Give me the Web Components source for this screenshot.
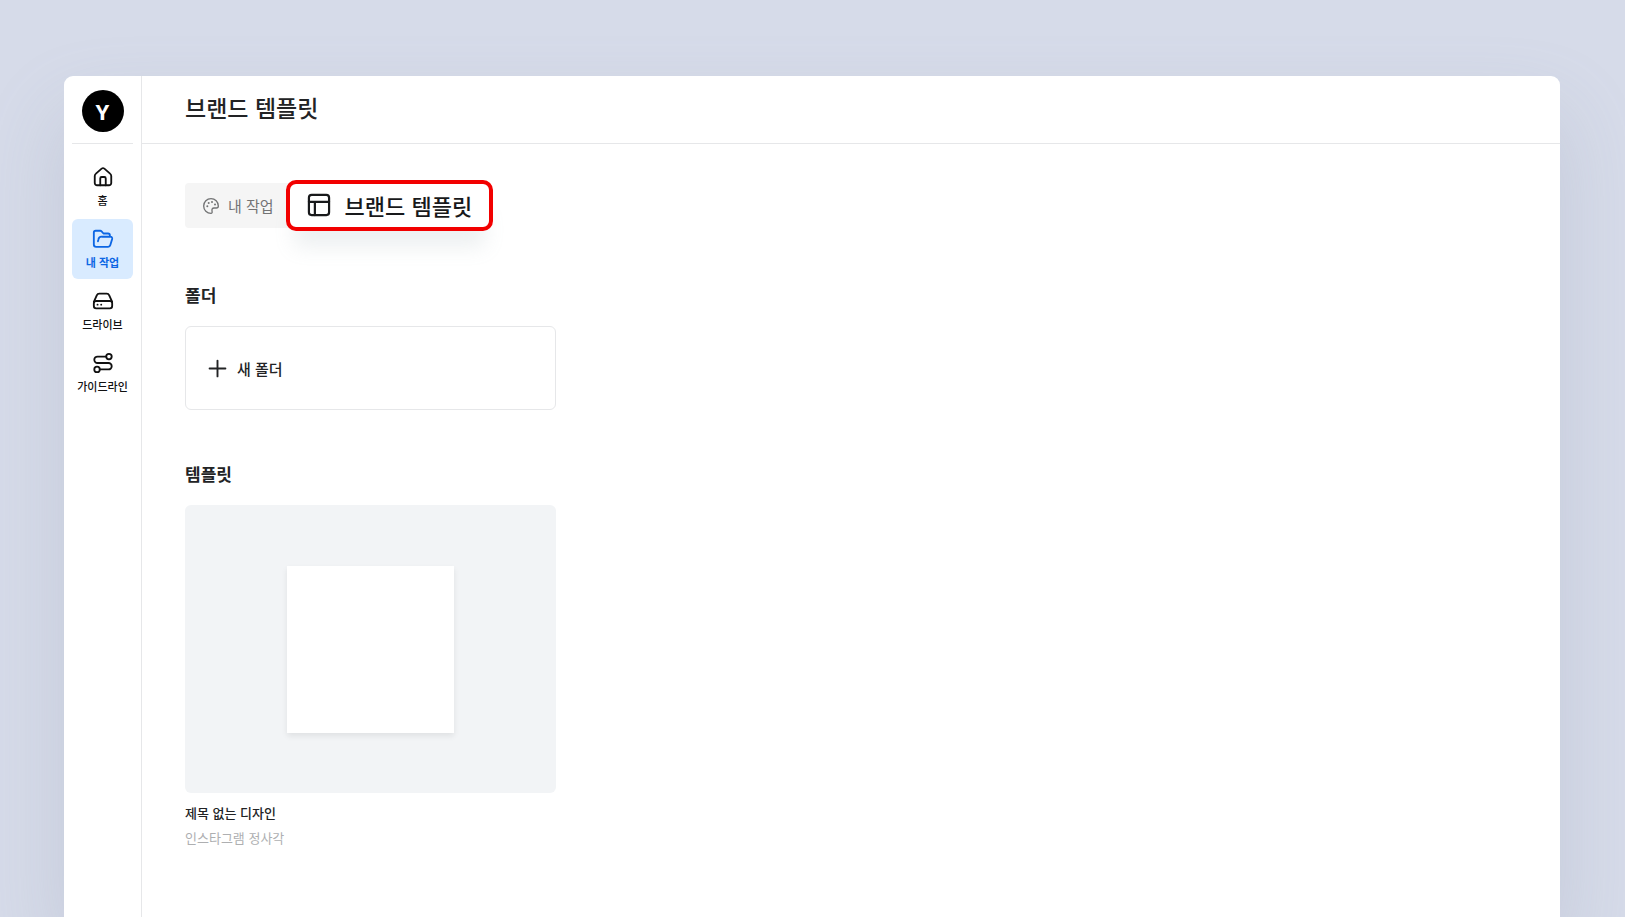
<!DOCTYPE html>
<html lang="ko">
<head>
<meta charset="utf-8">
<meta name="viewport" content="width=device-width, initial-scale=1">
<title>브랜드 템플릿</title>
<style>
  * { box-sizing: border-box; }

  body {
    --line: #e6e7e9;
    --ink: #222325;
    --blue: #0c66e4;
    margin: 0;
    min-height: 100vh;
    display: flex;
    background: #d6dbe9;
    color: var(--ink);
    font-family: "Noto Sans CJK KR", "Noto Sans", sans-serif;
    overflow: hidden;
  }
</style>
</head>
<body>
<app-window>
  <side-nav slot="nav">
    <nav-item icon="home">홈</nav-item>
    <nav-item icon="folder" active>내 작업</nav-item>
    <nav-item icon="drive">드라이브</nav-item>
    <nav-item icon="route">가이드라인</nav-item>
  </side-nav>
  <page-header slot="header">브랜드 템플릿</page-header>
  <tab-bar>
    <tab-item icon="palette">내 작업</tab-item>
    <tab-item icon="layout" selected>브랜드 템플릿</tab-item>
  </tab-bar>
  <card-section heading="폴더">
    <new-folder>새 폴더</new-folder>
  </card-section>
  <card-section heading="템플릿">
    <template-card>
      제목 없는 디자인
      <span slot="kind">인스타그램 정사각</span>
    </template-card>
  </card-section>
</app-window>

<script>
const ICONS = {
  home: `<path d="M3 11 C3 9.800 3.400 9 4.300 8.300 L10.500 2.900 Q12 1.700 13.500 2.900 L19.700 8.300 C20.600 9 21 9.800 21 11 V18.500 A2.500 2.500 0 0 1 18.500 21 H5.500 A2.500 2.500 0 0 1 3 18.500 Z"/><path d="M9 21 V13.500 A1.500 1.500 0 0 1 10.500 12 H13.500 A1.500 1.500 0 0 1 15 13.500 V21"/>`,
  folder: `<path d="M19.500 9 V8 A2 2 0 0 0 17.500 6 H12.500 L10.500 3.800 A2 2 0 0 0 9 3 H4 A2 2 0 0 0 2 5 V18 A2.500 2.500 0 0 0 4.500 20.500 H17.500 A2.500 2.500 0 0 0 20 18.600 L22 12 A2 2 0 0 0 20 9.500 H10.500 A3.500 3.500 0 0 0 7 12.500 L6.500 14.500"/>`,
  drive: `<path d="M2 13 L5.200 5.800 A3 3 0 0 1 8 4 H16 A3 3 0 0 1 18.800 5.800 L22 13"/><path d="M4.500 12 H19.500 A2.500 2.500 0 0 1 22 14.500 V17.500 A2.500 2.500 0 0 1 19.500 20 H4.500 A2.500 2.500 0 0 1 2 17.500 V14.500 A2.500 2.500 0 0 1 4.500 12 Z"/><path d="M6 16 H6.100 M10 16 H10.100"/>`,
  route: `<circle cx="18.500" cy="5" r="3"/><circle cx="5.500" cy="19" r="3"/><path d="M15.500 5 H6 A3.500 3.500 0 0 0 6 12 H18 A3.500 3.500 0 0 1 18 19 H8.500"/>`,
  palette: `<path d="M12 1 A11 11 0 1 0 12 23 C13.500 23 14 21.800 13.600 20 C12.900 17 14 15 16.500 15 H20 C22 15 23 13.800 23 12 A11 11 0 0 0 12 1 Z"/><g fill="currentColor" stroke="none"><circle cx="6.500" cy="12.500" r="1.500"/><circle cx="8.500" cy="7.500" r="1.500"/><circle cx="13.500" cy="6" r="1.500"/><circle cx="18" cy="9.800" r="1.500"/></g>`,
  layout: `<rect x="1" y="1" width="22" height="22" rx="3"/><path d="M1 8.500 H23 M7.500 8.500 V23"/>`,
  plus: `<path d="M12 2 V22 M2 12 H22"/>`
};

function icon(name, size, stroke) {
  return /* html */`
    <svg width="${size}" height="${size}" viewBox="0 0 24 24" fill="none"
      stroke="currentColor" stroke-width="${stroke}" stroke-linecap="round"
      stroke-linejoin="round" overflow="visible" aria-hidden="true">${ICONS[name]}</svg>`;
}

class BaseElement extends HTMLElement {
  constructor() {
    super();
    this.attachShadow({ mode: "open" });
  }

  connectedCallback() {
    this.shadowRoot.innerHTML = /* html */`
    <style>
      * { box-sizing: border-box; margin: 0; }
      :host { display: block; box-sizing: border-box; }
      button { font: inherit; color: inherit; border: 0; background: none; padding: 0; cursor: pointer; }
      svg { flex: none; display: block; }
      ${this.constructor.styles}
    </style>
    ${this.render()}`;
  }
}

class AppWindow extends BaseElement {
  static get styles() {
    return /* css */`
      :host {
        flex: 1;
        display: flex;
        margin: 76px 65px 0 64px;
        background: #fff;
        border-radius: 9px 9px 0 0;
        box-shadow: 0 40px 80px #8a92a83d;
      }

      .page {
        flex: 1;
        min-width: 0;
      }

      main {
        display: flex;
        flex-direction: column;
        gap: 48px;
        padding: 36px 43px;
      }
    `;
  }

  render() {
    return /* html */`
    <slot name="nav"></slot>
    <div class="page">
      <slot name="header"></slot>
      <main><slot></slot></main>
    </div>`;
  }
}

class SideNav extends BaseElement {
  static get styles() {
    return /* css */`
      :host {
        flex: none;
        width: 78px;
        padding: 0 8px;
        border-right: 1px solid var(--line);
      }

      .brand {
        display: flex;
        justify-content: center;
        padding: 14px 0 11px;
        border-bottom: 1px solid var(--line);
      }

      .avatar {
        width: 42px;
        height: 42px;
        border-radius: 50%;
        background: #000;
        color: #fff;
        font: 700 22px/40px "Noto Sans", sans-serif;
        text-align: center;
      }

      nav {
        display: flex;
        flex-direction: column;
        gap: 2px;
        padding-top: 13px;
      }
    `;
  }

  render() {
    return /* html */`
    <div class="brand"><button class="avatar">Y</button></div>
    <nav><slot></slot></nav>`;
  }
}

class NavItem extends BaseElement {
  static get styles() {
    return /* css */`
      a {
        display: flex;
        flex-direction: column;
        align-items: center;
        gap: 4px;
        height: 60px;
        padding-top: 9px;
        border-radius: 6px;
        color: #111;
        font-size: 11px;
        font-weight: 500;
        line-height: 16px;
        text-decoration: none;
        white-space: nowrap;
      }

      :host([active]) a {
        background: #d9ebff;
        color: var(--blue);
        font-weight: 700;
      }
    `;
  }

  render() {
    return /* html */`
    <a href="#">${icon(this.getAttribute("icon"), 22, 2)}<span><slot></slot></span></a>`;
  }
}

class PageHeader extends BaseElement {
  static get styles() {
    return /* css */`
      :host {
        padding: 14px 43px 19px;
        border-bottom: 1px solid var(--line);
      }

      h1 {
        font-size: 23px;
        font-weight: 500;
        line-height: 34px;
      }
    `;
  }

  render() {
    return /* html */`<h1><slot></slot></h1>`;
  }
}

class TabBar extends BaseElement {
  static get styles() {
    return /* css */`
      :host {
        display: flex;
        align-items: center;
      }
    `;
  }

  render() {
    return /* html */`<slot></slot>`;
  }
}

class TabItem extends BaseElement {
  static get styles() {
    return /* css */`
      button {
        display: flex;
        align-items: center;
        gap: 9px;
        height: 45px;
        padding: 0 20px 0 18px;
        border-radius: 4px 0 0 4px;
        background: #f5f5f5;
        color: #737475;
        font-size: 15px;
        white-space: nowrap;
      }

      :host([selected]) {
        margin-left: -8px;
      }

      :host([selected]) button {
        gap: 15px;
        height: 51px;
        padding: 0 17px 2px 18px;
        border: 4px solid #f20000;
        border-radius: 10px;
        background: #fff;
        box-shadow: 0 24px 20px -8px #8fa3a829;
        color: #18191b;
        font-size: 22px;
        font-weight: 500;
        line-height: 32px;
      }
    `;
  }

  render() {
    const selected = this.hasAttribute("selected");
    return /* html */`
    <button aria-pressed="${selected}">
      ${selected ? icon(this.getAttribute("icon"), 22, 2.4) : icon(this.getAttribute("icon"), 16, 2)}
      <span><slot></slot></span>
    </button>`;
  }
}

class CardSection extends BaseElement {
  static get styles() {
    return /* css */`
      :host {
        padding-top: 3px;
      }

      h2 {
        margin-bottom: 18px;
        font-size: 17px;
        font-weight: 700;
        line-height: 26px;
      }

      .grid {
        display: grid;
        grid-template-columns: repeat(auto-fill, 371px);
        gap: 24px;
      }
    `;
  }

  render() {
    return /* html */`
    <h2>${this.getAttribute("heading")}</h2>
    <div class="grid"><slot></slot></div>`;
  }
}

class NewFolder extends BaseElement {
  static get styles() {
    return /* css */`
      button {
        display: flex;
        align-items: center;
        gap: 10px;
        width: 100%;
        height: 84px;
        padding: 0 22px;
        border: 1px solid var(--line);
        border-radius: 6px;
        font-size: 15px;
        font-weight: 500;
      }
    `;
  }

  render() {
    return /* html */`<button>${icon("plus", 19, 2.4)}<span><slot></slot></span></button>`;
  }
}

class TemplateCard extends BaseElement {
  static get styles() {
    return /* css */`
      .preview {
        display: flex;
        align-items: center;
        justify-content: center;
        height: 288px;
        border-radius: 6px;
        background: #f2f4f6;
      }

      .paper {
        width: 167px;
        height: 167px;
        background: #fff;
        box-shadow: 0 3px 6px #00000014;
      }

      h3 {
        margin-top: 10px;
        font-size: 13px;
        font-weight: 500;
        line-height: 20px;
      }

      p {
        margin-top: 5px;
        color: #aeafb1;
        font-size: 13px;
        line-height: 20px;
      }
    `;
  }

  render() {
    return /* html */`
    <div class="preview"><div class="paper"></div></div>
    <h3><slot></slot></h3>
    <p><slot name="kind"></slot></p>`;
  }
}

customElements.define("app-window", AppWindow);
customElements.define("side-nav", SideNav);
customElements.define("nav-item", NavItem);
customElements.define("page-header", PageHeader);
customElements.define("tab-bar", TabBar);
customElements.define("tab-item", TabItem);
customElements.define("card-section", CardSection);
customElements.define("new-folder", NewFolder);
customElements.define("template-card", TemplateCard);
</script>
</body>
</html>
